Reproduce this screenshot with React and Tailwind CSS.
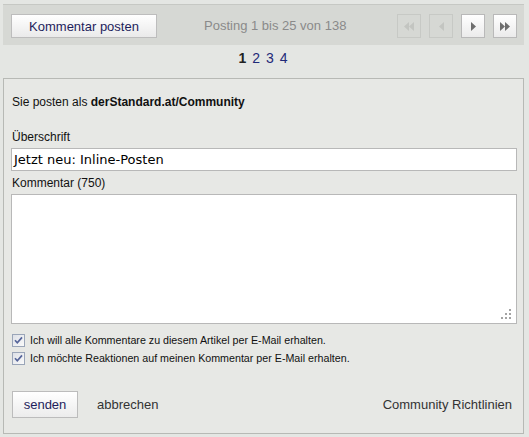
import React from "react";

const F = { fontFamily: '"Liberation Sans", Arial, sans-serif' };

function Tri({ dir = "right", color }) {
  return (
    <svg width="5" height="9" viewBox="0 0 5 9">
      {dir === "right" ? (
        <polygon points="0,0 5,4.5 0,9" fill={color} />
      ) : (
        <polygon points="5,0 0,4.5 5,9" fill={color} />
      )}
    </svg>
  );
}

function NavBtn({ enabled, dir, double }) {
  const color = enabled ? "#6e6e6e" : "#c3c5c1";
  return (
    <div
      className={
        "w-[24px] h-[24px] flex items-center justify-center border " +
        (enabled
          ? "border-[#b9b9b9] bg-gradient-to-b from-[#ffffff] to-[#ebebeb]"
          : "border-[#c7c9c5]")
      }
    >
      <Tri dir={dir} color={color} />
      {double && <Tri dir={dir} color={color} />}
    </div>
  );
}

function Check() {
  return (
    <svg width="13" height="13" viewBox="0 0 13 13" className="shrink-0">
      <defs>
        <linearGradient id="cbg" x1="0" y1="0" x2="1" y2="1">
          <stop offset="0" stopColor="#dcdfe6" />
          <stop offset="1" stopColor="#fbfbfb" />
        </linearGradient>
      </defs>
      <rect x="0.5" y="0.5" width="12" height="12" fill="url(#cbg)" stroke="#9aa5b8" />
      <path d="M3 6.2 L5.3 8.8 L10 3.4" fill="none" stroke="#56659a" strokeWidth="1.7" />
    </svg>
  );
}

export default function App() {
  return (
    <div className="w-[529px] h-[437px] bg-[#e4e6e3] pt-[4px] px-[3px] overflow-hidden" style={F}>
      {/* top bar */}
      <div className="h-[41px] w-[521px] border-t border-[#c6c8c4] bg-[#d6d8d4] flex items-start pt-[9px] pl-[8px]">
        <button className="w-[146px] h-[24px] border border-[#bdbdbd] bg-gradient-to-b from-[#ffffff] to-[#eaeaea] text-[13px] text-[#1e1e5c] leading-none">
          Kommentar posten
        </button>
        <div className="ml-[47px] h-[24px] flex items-center text-[13px] text-[#8a8a8a]">
          Posting 1 bis 25 von 138
        </div>
        <div className="ml-auto mr-[7px] flex gap-[8px]">
          <NavBtn enabled={false} dir="left" double />
          <NavBtn enabled={false} dir="left" />
          <NavBtn enabled dir="right" />
          <NavBtn enabled dir="right" double />
        </div>
      </div>

      {/* page numbers */}
      <div className="h-[33px] flex items-center justify-center gap-[6px] text-[14px] pb-[7px] pr-[3px]">
        <span className="font-bold text-[#222]">1</span>
        <span className="text-[#1f2a78]">2</span>
        <span className="text-[#1f2a78]">3</span>
        <span className="text-[#1f2a78]">4</span>
      </div>

      {/* form panel */}
      <div className="w-[521px] h-[356px] border border-[#b7b9b5] bg-[#e7e8e5] pl-[7px] pr-[6px] pt-[16px]">
        <div className="h-[14px] leading-[14px] text-[12px] text-[#111] pl-[1px]">
          Sie posten als <b>derStandard.at/Community</b>
        </div>
        <div className="mt-[21px] h-[14px] leading-[14px] text-[12px] text-[#111] pl-[1px]">
          Überschrift
        </div>
        <div
          className="mt-[4px] h-[23px] border border-[#b8b8b8] bg-white flex items-center pl-[2px] text-[13px] text-black"
          style={{ fontFamily: '"DejaVu Sans", Verdana, sans-serif' }}
        >
          Jetzt neu: Inline-Posten
        </div>
        <div className="mt-[5px] h-[14px] leading-[14px] text-[12px] text-[#111] pl-[1px]">
          Kommentar (750)
        </div>
        <div className="mt-[4px] h-[130px] border border-[#b8b8b8] bg-white relative">
          <svg width="12" height="12" viewBox="0 0 12 12" className="absolute right-[3px] bottom-[2px]">
            <rect x="8" y="0" width="2" height="2" fill="#a3a3a3" />
            <rect x="4" y="4" width="2" height="2" fill="#a3a3a3" />
            <rect x="8" y="4" width="2" height="2" fill="#a3a3a3" />
            <rect x="0" y="8" width="2" height="2" fill="#a3a3a3" />
            <rect x="4" y="8" width="2" height="2" fill="#a3a3a3" />
            <rect x="8" y="8" width="2" height="2" fill="#a3a3a3" />
          </svg>
        </div>
        <div className="mt-[9px] flex flex-col gap-[4px] pl-[1px]">
          <div className="h-[14px] flex items-center gap-[5px] text-[10.7px] text-[#111]">
            <Check />
            <span>Ich will alle Kommentare zu diesem Artikel per E-Mail erhalten.</span>
          </div>
          <div className="h-[14px] flex items-center gap-[5px] text-[10.7px] text-[#111]">
            <Check />
            <span>Ich möchte Reaktionen auf meinen Kommentar per E-Mail erhalten.</span>
          </div>
        </div>
        <div className="mt-[26px] flex items-center">
          <button className="ml-[1px] w-[66px] h-[27px] border border-[#bcbcbc] bg-gradient-to-b from-[#ffffff] to-[#ececec] text-[13px] text-[#1e1e5c] leading-none">
            senden
          </button>
          <span className="ml-[19px] text-[13px] text-[#333]">abbrechen</span>
          <span className="ml-auto mr-[5px] text-[13px] text-[#333]">Community Richtlinien</span>
        </div>
      </div>
    </div>
  );
}
